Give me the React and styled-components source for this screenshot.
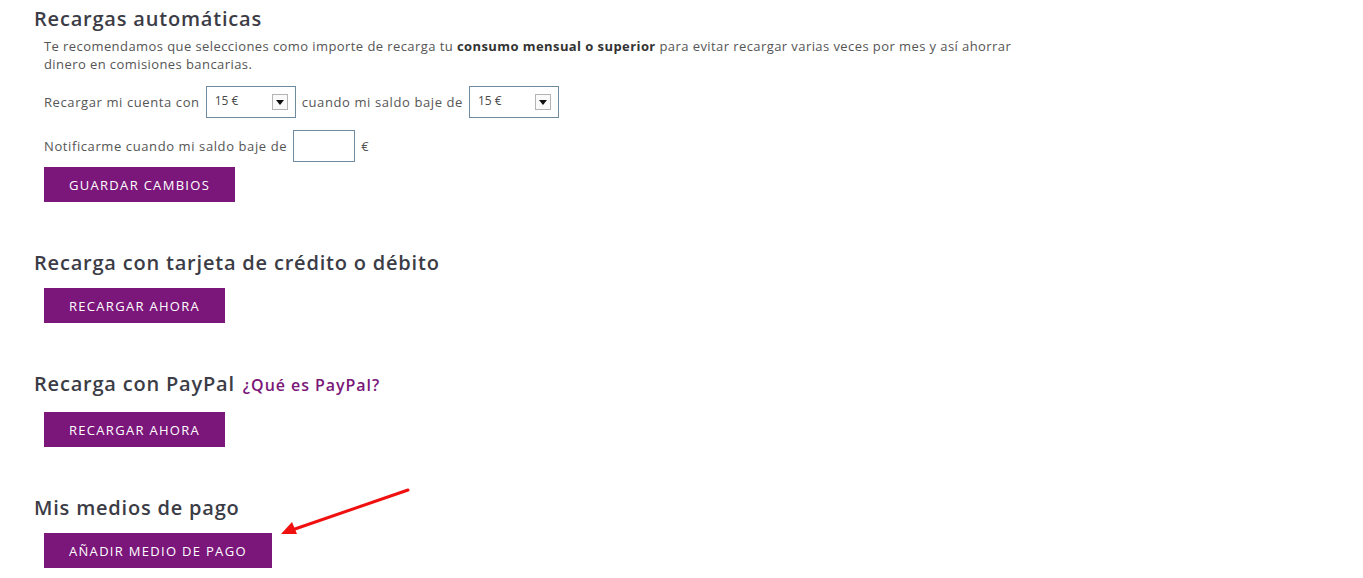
import React from 'react';
import styled, { createGlobalStyle } from 'styled-components';

const GlobalStyle = createGlobalStyle`
  body {
    margin: 0;
    background: #fff;
    font-family: "Open Sans", "Liberation Sans", sans-serif;
    color: #4a4a4a;
  }
`

const Page = styled.div`
  position: relative;
  padding: 7px 0 0 34px;
  width: 1363px;
  height: 578px;
  box-sizing: border-box;
  overflow: hidden;
`

const Section = styled.section`
  margin-bottom: 49px;
`

const Heading = styled.h2`
  margin: 0;
  height: 24px;
  font-size: 20px;
  line-height: 24px;
  font-weight: 600;
  letter-spacing: 0.8px;
  color: #3c3c46;
`

const HelpLink = styled.a`
  font-size: 16px;
  font-weight: 600;
  letter-spacing: 0.95px;
  color: #7a1779;
  text-decoration: none;
  margin-left: 2px;
`

const Body = styled.div`
  padding-left: 10px;
  margin-top: ${p => p.$top || 13}px;
`

const Intro = styled.p`
  margin: 0 0 13px;
  font-size: 13px;
  line-height: 18px;
  letter-spacing: 0.42px;
  max-width: 985px;
  color: #555;
  & b { color: #333; }
`

const Row = styled.div`
  display: flex;
  align-items: center;
  gap: 6px;
  font-size: 13px;
  letter-spacing: 0.6px;
  color: #555;
  margin-bottom: ${p => p.$bottom || 12}px;
`

const SelectBox = styled.div`
  width: 90px;
  height: 32px;
  box-sizing: border-box;
  border: 1px solid #6e8a9e;
  display: flex;
  align-items: center;
  justify-content: space-between;
  padding: 0 7px 0 8px;
  font-size: 12px;
  letter-spacing: 0;
  color: #4a4a4a;
  & span { margin-top: -3px; }
`

const ArrowBtn = styled.div`
  width: 16px;
  height: 16px;
  box-sizing: border-box;
  border: 1px solid #b4b4b4;
  background: #fafafa;
  display: flex;
  align-items: center;
  justify-content: center;
  &::after {
    content: '';
    border-left: 4px solid transparent;
    border-right: 4px solid transparent;
    border-top: 5px solid #111;
  }
`

const NumberInput = styled.input`
  width: 62px;
  height: 32px;
  box-sizing: border-box;
  border: 1px solid #6e8a9e;
  border-radius: 0;
  margin: 0;
`

const Button = styled.button`
  display: block;
  height: 35px;
  padding: 0 25px;
  border: none;
  border-radius: 0;
  background: #7b167b;
  color: #fff;
  font-family: inherit;
  font-size: 13px;
  letter-spacing: 1.3px;
  text-transform: uppercase;
  cursor: pointer;
`

const Annotation = styled.svg`
  position: absolute;
  left: 276px;
  top: 484px;
  overflow: visible;
`

const Select = ({ value }) => (
  <SelectBox>
    <span>{value}</span>
    <ArrowBtn />
  </SelectBox>
)

export default function App() {
  return (
    <Page>
      <GlobalStyle />
      <Section>
        <Heading>Recargas automáticas</Heading>
        <Body $top={6}>
          <Intro>
            Te recomendamos que selecciones como importe de recarga tu <b>consumo mensual o superior</b> para evitar recargar varias veces por mes y así ahorrar dinero en comisiones bancarias.
          </Intro>
          <Row>
            Recargar mi cuenta con
            <Select value="15 €" />
            cuando mi saldo baje de
            <Select value="15 €" />
          </Row>
          <Row $bottom={5}>
            Notificarme cuando mi saldo baje de
            <NumberInput type="text" />
            €
          </Row>
          <Button>Guardar cambios</Button>
        </Body>
      </Section>
      <Section>
        <Heading>Recarga con tarjeta de crédito o débito</Heading>
        <Body>
          <Button>Recargar ahora</Button>
        </Body>
      </Section>
      <Section>
        <Heading>Recarga con PayPal <HelpLink href="#">¿Qué es PayPal?</HelpLink></Heading>
        <Body $top={16}>
          <Button>Recargar ahora</Button>
        </Body>
      </Section>
      <Section>
        <Heading>Mis medios de pago</Heading>
        <Body>
          <Button>Añadir medio de pago</Button>
        </Body>
      </Section>
      <Annotation width="140" height="56" viewBox="0 0 140 56">
        <line x1="132" y1="6" x2="16" y2="46" stroke="#f01010" strokeWidth="3" strokeLinecap="round" />
        <polygon points="5,50 16,38 21,50" fill="#f01010" />
      </Annotation>
    </Page>
  );
}
